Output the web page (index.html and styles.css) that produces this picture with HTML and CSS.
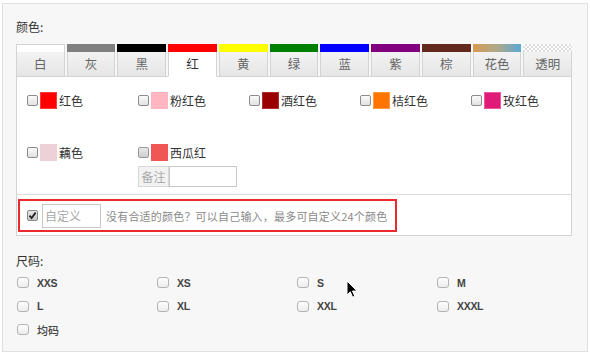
FILE: index.html
```html
<!DOCTYPE html>
<html lang="zh">
<head>
<meta charset="utf-8">
<link rel="stylesheet" href="styles.css">
</head>
<body>
<div class="panel">
  <div class="title">颜色:</div>
  <div class="tabs">
    <div class="tab"><span class="bar bar-white"></span><span class="lbl">白</span></div>
    <div class="tab"><span class="bar bar-gray"></span><span class="lbl">灰</span></div>
    <div class="tab"><span class="bar bar-black"></span><span class="lbl">黑</span></div>
    <div class="tab active"><span class="bar bar-red"></span><span class="lbl">红</span></div>
    <div class="tab"><span class="bar bar-yellow"></span><span class="lbl">黄</span></div>
    <div class="tab"><span class="bar bar-green"></span><span class="lbl">绿</span></div>
    <div class="tab"><span class="bar bar-blue"></span><span class="lbl">蓝</span></div>
    <div class="tab"><span class="bar bar-purple"></span><span class="lbl">紫</span></div>
    <div class="tab"><span class="bar bar-brown"></span><span class="lbl">棕</span></div>
    <div class="tab"><span class="bar bar-multi"></span><span class="lbl">花色</span></div>
    <div class="tab"><span class="bar bar-clear"></span><span class="lbl">透明</span></div>
  </div>
  <div class="box">
    <ul class="colors">
      <li class="item"><div class="line"><span class="cb"></span><span class="sw sw-red"></span><span class="name">红色</span></div></li>
      <li class="item"><div class="line"><span class="cb"></span><span class="sw sw-pink"></span><span class="name">粉红色</span></div></li>
      <li class="item"><div class="line"><span class="cb"></span><span class="sw sw-wine"></span><span class="name">酒红色</span></div></li>
      <li class="item"><div class="line"><span class="cb"></span><span class="sw sw-orange"></span><span class="name">桔红色</span></div></li>
      <li class="item"><div class="line"><span class="cb"></span><span class="sw sw-rose"></span><span class="name">玫红色</span></div></li>
      <li class="item"><div class="line"><span class="cb"></span><span class="sw sw-lotus"></span><span class="name">藕色</span></div></li>
      <li class="item"><div class="line"><span class="cb cb-dim"></span><span class="sw sw-melon"></span><span class="name">西瓜红</span></div>
        <div class="remark"><span class="addon">备注</span><span class="field"></span></div></li>
    </ul>
    <div class="custom-wrap">
      <div class="custom">
        <span class="cb cb-checked"><svg width="9" height="9" viewBox="0 0 9 9"><path d="M1.5 4.6 L3.6 7 L7.6 1.6" fill="none" stroke="#222" stroke-width="1.8"/></svg></span>
        <span class="custom-input">自定义</span>
        <span class="hint">没有合适的颜色？可以自己输入，最多可自定义24个颜色</span>
      </div>
    </div>
  </div>
  <div class="title size-title">尺码:</div>
  <div class="sizes">
    <div class="size"><span class="mcb"></span><span class="sl">XXS</span></div>
    <div class="size"><span class="mcb"></span><span class="sl">XS</span></div>
    <div class="size"><span class="mcb"></span><span class="sl">S</span></div>
    <div class="size"><span class="mcb"></span><span class="sl">M</span></div>
    <div class="size"><span class="mcb"></span><span class="sl">L</span></div>
    <div class="size"><span class="mcb"></span><span class="sl">XL</span></div>
    <div class="size"><span class="mcb"></span><span class="sl">XXL</span></div>
    <div class="size"><span class="mcb"></span><span class="sl">XXXL</span></div>
    <div class="size"><span class="mcb"></span><span class="sl cjk">均码</span></div>
  </div>
</div>
<svg class="cursor" width="12" height="19" viewBox="0 0 12 19"><path d="M1 1 L1 15 L4.3 11.8 L6.6 17.2 L8.8 16.2 L6.5 11 L11 11 Z" fill="#000" stroke="#fff" stroke-width="1"/></svg>
</body>
</html>
```
FILE: styles.css
```css
* { box-sizing: border-box; }
html, body { margin: 0; padding: 0; background: #fff; }
body {
  font-family: "Noto Sans CJK SC", "Liberation Sans", sans-serif;
  font-size: 12px;
  color: #333;
  position: relative;
  width: 590px;
  height: 356px;
  overflow: hidden;
}
.panel {
  margin: 3px 2px 0 2px;
  width: 586px;
  height: 349px;
  border: 1px solid #e0e0e0;
  background: #f7f7f7;
  padding: 15px 15px 0 13px;
}
.title { font-size: 12px; line-height: 16px; height: 16px; color: #333; margin-bottom: 9px; }
.tabs { display: flex; gap: 2px; width: 556px; position: relative; z-index: 1; }
.tab {
  flex: 1;
  height: 33px;
  border: 1px solid #d3d3d3;
  display: flex;
  flex-direction: column;
  background: linear-gradient(#f6f6f6, #e6e6e6);
}
.bar { display: block; height: 8px; margin: -1px -1px 0; }
.lbl { flex: 1; text-align: center; line-height: 24px; color: #666; font-size: 12.5px; }
.tab.active { background: #fff; border-bottom-color: #fff; }
.tab.active .lbl { color: #333; }
.bar-white { background: #fff; margin: 0; height: 7px; }
.bar-gray { background: #808080; }
.bar-black { background: #000; }
.bar-red { background: #ff0000; }
.bar-yellow { background: #ffff00; }
.bar-green { background: #008000; }
.bar-blue { background: #0000ff; }
.bar-purple { background: #800080; }
.bar-brown { background: #62291f; }
.bar-multi { background: linear-gradient(90deg, #d89a52, #b0a88a 50%, #5aa9d6); }
.bar-clear {
  background-color: #fff;
  background-image: linear-gradient(45deg, #dcdcdc 25%, transparent 25%, transparent 75%, #dcdcdc 75%),
                    linear-gradient(45deg, #dcdcdc 25%, transparent 25%, transparent 75%, #dcdcdc 75%);
  background-size: 4px 4px;
  background-position: 0 0, 2px 2px;
}
.box {
  width: 556px;
  margin-top: -1px;
  border: 1px solid #d3d3d3;
  background: #fff;
}
.colors {
  list-style: none;
  margin: 0;
  padding: 15px 0 7px 10px;
  display: grid;
  grid-template-columns: repeat(4, 111px) 1fr;
  row-gap: 35px;
  align-items: start;
}
.line { display: flex; align-items: center; height: 17px; }
.cb {
  width: 11px; height: 11px;
  border: 1px solid #8c8c8c;
  border-radius: 2px;
  background: linear-gradient(#fafafa, #e2e2e2);
  margin-right: 2px;
  display: inline-flex; align-items: center; justify-content: center;
  flex: none;
}
.cb-dim { background: linear-gradient(#e8e8e8, #cfcfcf); border-color: #999; }
.sw { width: 17px; height: 17px; margin-right: 2px; flex: none; }
.sw-red { background: #ff0000; border: 1px solid #ff3a3a; }
.sw-pink { background: #ffb6c1; }
.sw-wine { background: #990000; border: 1px solid #b03030; }
.sw-orange { background: #ff7500; border: 1px solid #ff9a40; }
.sw-rose { background: #df1a78; border: 1px solid #ea5a9c; }
.sw-lotus { background: #eed0d8; }
.sw-melon { background: #f05654; }
.name { line-height: 17px; color: #333; }
.remark { display: flex; margin-top: 5px; height: 21px; }
.addon {
  width: 31px;
  border: 1px solid #d8d8d8;
  background: #f2f2f2;
  color: #aaa;
  text-align: center;
  line-height: 19px;
}
.field { width: 68px; border: 1px solid #c8c8c8; background: #fff; }
.custom-wrap { border-top: 1px solid #dcdcdc; padding: 4px 0 3px 1px; }
.custom {
  width: 379px;
  height: 33px;
  border: 2px solid #ea2a2e;
  display: flex;
  align-items: center;
  padding-left: 7px;
}
.cb-checked { background: linear-gradient(#e6e6e6, #c8c8c8); border-color: #888; margin-right: 4px; }
.custom-input {
  width: 59px;
  height: 24px;
  border: 1px solid #c6c6c6;
  color: #aaa;
  line-height: 22px;
  padding-left: 2px;
  margin-right: 5px;
  background: #fff;
}
.hint { font-size: 11px; color: #8a8a8a; letter-spacing: 0.2px; }
.size-title { margin-top: 17px; margin-bottom: 2px; }
.sizes {
  display: grid;
  grid-template-columns: repeat(4, 140px);
  grid-auto-rows: 23.5px;
  padding-left: 1px;
}
.size { display: flex; align-items: center; }
.mcb {
  width: 12px; height: 11px;
  border: 1px solid #b4b4b4;
  border-radius: 3px;
  background: linear-gradient(#ffffff, #ececec);
  margin-right: 8px;
  flex: none;
}
.sl {
  font-family: "Liberation Sans", "Noto Sans CJK SC", sans-serif;
  font-weight: bold;
  font-size: 10.5px;
  color: #444;
  letter-spacing: -0.3px;
}
.sl.cjk { font-family: "Noto Sans CJK SC", sans-serif; font-weight: 500; font-size: 11px; letter-spacing: 0; }
.cursor { position: absolute; left: 346px; top: 280px; }
```
